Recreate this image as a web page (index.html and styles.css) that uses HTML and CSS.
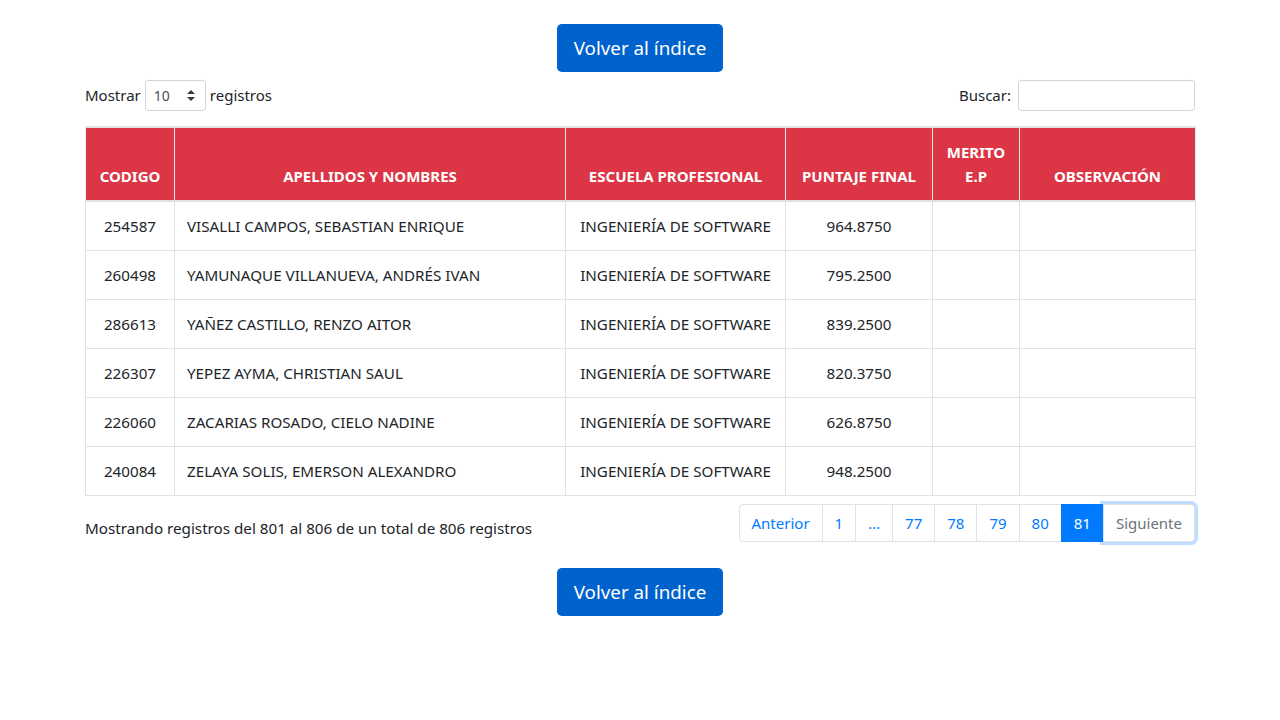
FILE: index.html
```html
<!DOCTYPE html>
<html lang="es">
<head>
<meta charset="utf-8">
<title>Resultados</title>
<link rel="stylesheet" href="styles.css">
</head>
<body>
<div class="container">
  <div class="center top-btn"><a class="btn" href="#">Volver al índice</a></div>

  <div class="toolbar">
    <label class="length">Mostrar
      <span class="select-wrap">
        <select class="select"><option>10</option><option>25</option><option>50</option></select>
        <svg class="caret" width="8" height="11" viewBox="0 0 8 11"><path d="M4 0 L8 4 H0 Z M4 11 L0 7 H8 Z" fill="#343a40"/></svg>
      </span>
      registros</label>
    <label class="search">Buscar: <input class="input" type="search"></label>
  </div>

  <table class="table">
    <thead>
      <tr>
        <th class="c1">CODIGO</th>
        <th class="c2">APELLIDOS Y NOMBRES</th>
        <th class="c3">ESCUELA PROFESIONAL</th>
        <th class="c4">PUNTAJE FINAL</th>
        <th class="c5">MERITO E.P</th>
        <th class="c6">OBSERVACIÓN</th>
      </tr>
    </thead>
    <tbody>
      <tr><td class="ctr">254587</td><td>VISALLI CAMPOS, SEBASTIAN ENRIQUE</td><td class="ctr">INGENIERÍA DE SOFTWARE</td><td class="ctr">964.8750</td><td></td><td></td></tr>
      <tr><td class="ctr">260498</td><td>YAMUNAQUE VILLANUEVA, ANDRÉS IVAN</td><td class="ctr">INGENIERÍA DE SOFTWARE</td><td class="ctr">795.2500</td><td></td><td></td></tr>
      <tr><td class="ctr">286613</td><td>YAÑEZ CASTILLO, RENZO AITOR</td><td class="ctr">INGENIERÍA DE SOFTWARE</td><td class="ctr">839.2500</td><td></td><td></td></tr>
      <tr><td class="ctr">226307</td><td>YEPEZ AYMA, CHRISTIAN SAUL</td><td class="ctr">INGENIERÍA DE SOFTWARE</td><td class="ctr">820.3750</td><td></td><td></td></tr>
      <tr><td class="ctr">226060</td><td>ZACARIAS ROSADO, CIELO NADINE</td><td class="ctr">INGENIERÍA DE SOFTWARE</td><td class="ctr">626.8750</td><td></td><td></td></tr>
      <tr><td class="ctr">240084</td><td>ZELAYA SOLIS, EMERSON ALEXANDRO</td><td class="ctr">INGENIERÍA DE SOFTWARE</td><td class="ctr">948.2500</td><td></td><td></td></tr>
    </tbody>
  </table>

  <div class="footer">
    <div class="info">Mostrando registros del 801 al 806 de un total de 806 registros</div>
    <ul class="pagination">
      <li><a class="page" href="#">Anterior</a></li>
      <li><a class="page" href="#">1</a></li>
      <li><a class="page" href="#">…</a></li>
      <li><a class="page" href="#">77</a></li>
      <li><a class="page" href="#">78</a></li>
      <li><a class="page" href="#">79</a></li>
      <li><a class="page" href="#">80</a></li>
      <li><a class="page active" href="#">81</a></li>
      <li><a class="page disabled focus" href="#">Siguiente</a></li>
    </ul>
  </div>

  <div class="center bottom-btn"><a class="btn" href="#">Volver al índice</a></div>
</div>
</body>
</html>
```

FILE: styles.css
```css
* { box-sizing: border-box; }
html, body { margin: 0; padding: 0; background: #fff; }
body {
  font-family: "Noto Sans", "Open Sans", "DejaVu Sans", sans-serif;
  font-size: 16px;
  line-height: 1.5;
  color: #212529;
}
.container {
  width: 1140px;
  margin: 0 auto;
  padding: 0 15px;
}
.center { text-align: center; }
.top-btn { padding-top: 24px; }
.bottom-btn { margin-top: 26px; }
.btn {
  display: inline-block;
  background: #0062cc;
  color: #fff;
  text-decoration: none;
  font-size: 18.8px;
  line-height: 30px;
  padding: 9px 17px;
  border-radius: 4.8px;
}
.toolbar {
  display: flex;
  justify-content: space-between;
  align-items: center;
  margin-top: 8px;
  height: 31px;
}
.length, .search {
  display: flex;
  align-items: center;
  gap: 4px;
  font-size: 15px;
}
.select-wrap { position: relative; display: inline-block; }
.select {
  appearance: none;
  -webkit-appearance: none;
  width: 61px;
  height: 31px;
  border: 1px solid #ced4da;
  border-radius: 3.2px;
  background: #fff;
  font-family: inherit;
  font-size: 14px;
  color: #495057;
  padding: 0 8px;
}
.caret { position: absolute; right: 11px; top: 10px; pointer-events: none; }
.input {
  width: 177px;
  height: 31px;
  border: 1px solid #ced4da;
  border-radius: 3.2px;
  margin-left: 3px;
}
.table {
  width: 1110px;
  table-layout: fixed;
  border-collapse: collapse;
  margin-top: 15px;
  border-top: 2px solid #dee2e6;
}
.table th, .table td { border: 1px solid #dee2e6; }
.table th {
  background: #dc3545;
  color: #fff;
  font-size: 15px;
  font-weight: 700;
  text-align: center;
  vertical-align: bottom;
  padding: 12px;
  line-height: 24px;
  border-color: #e9ecef;
  border-bottom: 2px solid #dee2e6;
  height: 74px;
}
.table td {
  font-size: 15.2px;
  padding: 12px;
  height: 49px;
  line-height: 24px;
}
.table td.ctr { text-align: center; }
.c1 { width: 89px; }
.c2 { width: 391px; }
.c3 { width: 220px; }
.c4 { width: 147px; }
.c5 { width: 87px; }
.c6 { width: 176px; }
.footer {
  display: flex;
  justify-content: space-between;
  align-items: flex-start;
  margin-top: 8px;
}
.info { padding-top: 13px; font-size: 15.2px; }
.pagination {
  display: flex;
  list-style: none;
  margin: 0;
  padding: 0;
}
.page {
  display: block;
  position: relative;
  font-size: 15px;
  line-height: 22px;
  padding: 7px 12px;
  margin-left: -1px;
  border: 1px solid #dee2e6;
  color: #007bff;
  text-decoration: none;
  background: #fff;
}
.pagination li:first-child .page { margin-left: 0; border-radius: 4px 0 0 4px; }
.pagination li:last-child .page { border-radius: 0 4px 4px 0; }
.page.active { background: #007bff; border-color: #007bff; color: #fff; z-index: 2; }
.page.disabled { color: #6c757d; }
.page.focus { z-index: 3; box-shadow: 0 0 0 3px rgba(0,123,255,.25); }
```
